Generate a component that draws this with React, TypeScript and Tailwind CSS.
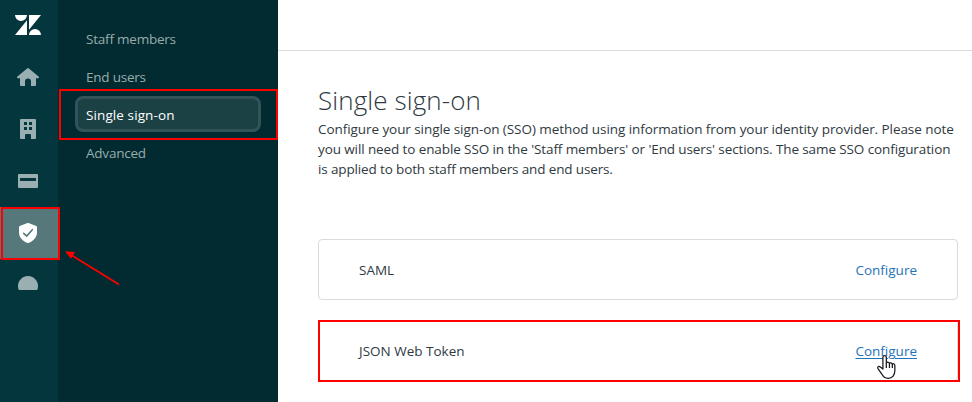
import type { ReactNode } from 'react'
import clsx from 'clsx'

interface RailItem {
  id: string
  label: string
  icon: ReactNode
  active?: boolean
}

const railItems: RailItem[] = [
  {
    id: 'home',
    label: 'Home',
    icon: (
      <svg width="22" height="18" viewBox="0 0 22 18" fill="currentColor" aria-hidden="true">
        <path d="M10.400.3a1 1 0 0 1 1.200 0l10 8.200c.7.6.3 1.800-.6 1.800h-2V17a1 1 0 0 1-1 1h-4v-4.500a3 3 0 0 0-6 0V18H4a1 1 0 0 1-1-1v-6.700H1c-.9 0-1.300-1.200-.6-1.800z" />
      </svg>
    )
  },
  {
    id: 'account',
    label: 'Account',
    icon: (
      <svg width="16" height="20" viewBox="0 0 16 20" fill="currentColor" aria-hidden="true">
        <path
          fillRule="evenodd"
          d="M1 0h14a1 1 0 0 1 1 1v18a1 1 0 0 1-1 1h-4v-4a1 1 0 0 0-1-1H6a1 1 0 0 0-1 1v4H1a1 1 0 0 1-1-1V1a1 1 0 0 1 1-1zm3 3v3h3V3zm5 0v3h3V3zM4 8v3h3V8zm5 0v3h3V8z"
        />
      </svg>
    )
  },
  {
    id: 'billing',
    label: 'Billing',
    icon: (
      <svg width="20" height="14" viewBox="0 0 20 14" fill="currentColor" aria-hidden="true">
        <path fillRule="evenodd" d="M1 0h18a1 1 0 0 1 1 1v12a1 1 0 0 1-1 1H1a1 1 0 0 1-1-1V1a1 1 0 0 1 1-1zm1 4v3h16V4z" />
      </svg>
    )
  },
  {
    id: 'security',
    label: 'Security',
    active: true,
    icon: (
      <svg width="18" height="20" viewBox="0 0 18 20" aria-hidden="true">
        <path fill="currentColor" d="M8.500.1a1.300 1.300 0 0 1 1 0l7.800 3c.4.2.7.5.7 1V9.500c0 4.600-3.500 8.800-8.600 10.400a1.300 1.300 0 0 1-.8 0C3.500 18.300 0 14.100 0 9.500V4.100c0-.5.3-.8.7-1z" />
        <path d="M4.700 10.300 7.700 13l5.600-6.300" fill="none" stroke="#57787b" strokeWidth="1.600" strokeLinecap="round" />
      </svg>
    )
  },
  {
    id: 'channels',
    label: 'Channels',
    icon: (
      <svg width="20" height="14" viewBox="0 0 20 14" fill="currentColor" aria-hidden="true">
        <path d="M.8 14A10 10 0 1 1 19.200 14z" />
      </svg>
    )
  }
]

const sections = [
  { label: 'Staff members' },
  { label: 'End users' },
  { label: 'Single sign-on', active: true },
  { label: 'Advanced' }
]

const Logo = () => (
  <svg width="26" height="20" viewBox="0 0 26 20" fill="#fff" aria-label="Zendesk">
    <path d="M0 0h12a6 6 0 0 1-12 0zM12 5.300V20H0zM14 0h12L14 14.700zM14 20a6 6 0 0 1 12 0z" />
  </svg>
)

const Rail = () => (
  <nav className="relative flex w-[58px] shrink-0 flex-col bg-[#03363d]">
    <div className="flex h-[51px] items-center justify-center pb-px pr-0.5">
      <Logo />
    </div>
    {railItems.map((item) => (
      <button
        key={item.id}
        type="button"
        aria-label={item.label}
        className={clsx(
          'flex h-[52px] shrink-0 items-center justify-center pr-0.5',
          item.active ? 'bg-[#57787b] text-white' : 'text-[#9aafb1]',
          item.id === 'channels' && 'pb-1'
        )}
      >
        {item.icon}
      </button>
    ))}
    <div className="pointer-events-none absolute left-px top-[207px] z-10 h-[53px] w-[59px] border-2 border-[#fe0000]" />
  </nav>
)

const SectionMenu = () => (
  <aside className="relative w-[220px] shrink-0 bg-[#012b30] pl-[17px] pr-[17px] pt-5 text-[13.5px]">
    <ul className="flex flex-col gap-0.5">
      {sections.map((section) => (
        <li
          key={section.label}
          className={clsx(
            'flex h-9 items-center whitespace-nowrap rounded-lg border-[3px] pl-2 pt-0.5',
            section.active
              ? 'border-[#325359] bg-[#1c4145] tracking-[0.1px] text-white'
              : 'border-transparent tracking-[-0.22px] text-[#99abad]'
          )}
        >
          {section.label}
        </li>
      ))}
    </ul>
    <div className="pointer-events-none absolute left-px top-[89px] h-[51px] w-[219px] border-2 border-[#fe0000]" />
    <svg className="absolute left-1.5 top-[248px]" width="58" height="40" viewBox="0 0 58 40" aria-hidden="true">
      <path d="M8 7.500 55 36.500" stroke="#fe0000" strokeWidth="1.800" />
      <path d="M1 3.200 11 4 7 10.800z" fill="#fe0000" />
    </svg>
  </aside>
)

const PointerCursor = () => (
  <svg className="absolute left-5 top-[13px]" width="21" height="27" viewBox="0 0 20 26" aria-hidden="true">
    <path
      d="M7.500 14.500V3.200c0-2.200 3.300-2.200 3.300 0v5.600c0-1.300 2.900-1.300 3 .6 0-1.300 2.700-1.200 2.800.7 0-1.200 2.400-1 2.400 1v5.100c0 3.900-2.300 7.300-6.500 7.300-3.500 0-4.900-1.700-6.200-4.400L2.600 13.800c-.6-1.700 1.300-2.600 2.400-1.200z"
      fill="#fff"
      stroke="#17171f"
      strokeWidth="1.200"
      strokeLinejoin="round"
    />
    <path d="M10.800 8.800v4.700M13.800 9.400v4.100M16.600 10.100v3.400" stroke="#17171f" strokeWidth="1.200" />
  </svg>
)

interface MethodCardProps {
  name: string
  highlighted?: boolean
}

const MethodCard = ({ name, highlighted }: MethodCardProps) => (
  <div className="relative flex h-[61px] w-[640px] items-center justify-between rounded border border-[#d8dcde] pl-10 pr-10 pt-0.5 text-[13.5px]">
    <span>{name}</span>
    <a className={clsx('relative text-[#1f73b7]', highlighted && 'underline underline-offset-2')}>
      Configure
      {highlighted && <PointerCursor />}
    </a>
    {highlighted && (
      <div className="pointer-events-none absolute -left-px -top-px h-[62px] w-[642px] border-2 border-[#fe0000]" />
    )}
  </div>
)

export default function App() {
  return (
    <div className="flex h-[402px] w-[972px] overflow-hidden bg-white font-['Open_Sans','Noto_Sans',sans-serif] text-[#2f3941]">
      <Rail />
      <SectionMenu />
      <main className="min-w-0 flex-1">
        <header className="h-[51px] border-b border-[#d8dcde]" />
        <div className="pl-10 pt-[33px]">
          <h1 className="h-[35px] text-[26px] font-[340] leading-8 tracking-[0.1px]">Single sign-on</h1>
          <p className="whitespace-nowrap text-[13.5px] leading-5">
            <span className="block tracking-[-0.068px]">
              Configure your single sign-on (SSO) method using information from your identity provider. Please note
            </span>
            <span className="block tracking-[-0.105px]">
              you will need to enable SSO in the 'Staff members' or 'End users' sections. The same SSO configuration
            </span>
            <span className="block tracking-[-0.135px]">is applied to both staff members and end users.</span>
          </p>
          <div className="mt-[60px] flex flex-col gap-5">
            <MethodCard name="SAML" />
            <MethodCard name="JSON Web Token" highlighted />
          </div>
        </div>
      </main>
    </div>
  )
}
